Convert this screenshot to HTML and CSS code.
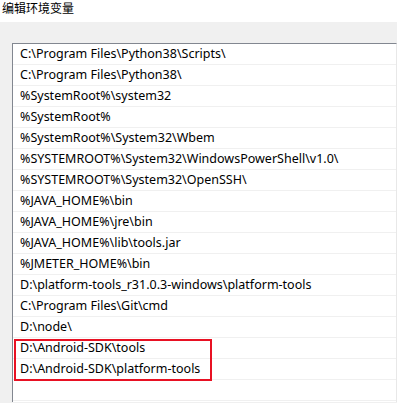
FILE: index.html
```html
<!DOCTYPE html>
<html lang="zh-CN">
<head>
<meta charset="utf-8">
<title>编辑环境变量</title>
<link rel="stylesheet" href="styles.css">
</head>
<body>
<div class="titlebar">编辑环境变量</div>
<div class="panel">
  <div class="listbox">
    <div class="row">C:\Program Files\Python38\Scripts\</div>
    <div class="row">C:\Program Files\Python38\</div>
    <div class="row">%SystemRoot%\system32</div>
    <div class="row">%SystemRoot%</div>
    <div class="row">%SystemRoot%\System32\Wbem</div>
    <div class="row">%SYSTEMROOT%\System32\WindowsPowerShell\v1.0\</div>
    <div class="row">%SYSTEMROOT%\System32\OpenSSH\</div>
    <div class="row">%JAVA_HOME%\bin</div>
    <div class="row">%JAVA_HOME%\jre\bin</div>
    <div class="row">%JAVA_HOME%\lib\tools.jar</div>
    <div class="row">%JMETER_HOME%\bin</div>
    <div class="row">D:\platform-tools_r31.0.3-windows\platform-tools</div>
    <div class="row">C:\Program Files\Git\cmd</div>
    <div class="row">D:\node\</div>
    <div class="highlight-group">
      <div class="row">D:\Android-SDK\tools</div>
      <div class="row">D:\Android-SDK\platform-tools</div>
      <div class="mark"></div>
    </div>
    <div class="row"></div>
  </div>
</div>
</body>
</html>
```
FILE: styles.css
```css
html, body {
  margin: 0;
  padding: 0;
  background: #f0f0f0;
  overflow: hidden;
}
body {
  width: 397px;
  height: 403px;
  font-family: "Noto Sans", "Noto Sans CJK SC", sans-serif;
  font-size: 12.5px;
  color: #000;
}
.titlebar {
  height: 22px;
  background: #fff;
  padding-left: 2px;
  line-height: 16px;
  font-family: "Noto Sans CJK SC", sans-serif;
  font-size: 12px;
  box-sizing: border-box;
}
.panel {
  padding: 21px 0 0 12px;
}
.listbox {
  background: #fff;
  border-top: 1px solid #828790;
  border-left: 1px solid #828790;
  border-right: 1px solid #e8e8e8;
  height: 358px;
  overflow: hidden;
}
.row {
  height: 20px;
  line-height: 20px;
  border-bottom: 1px solid #f0f0f0;
  padding-left: 7px;
  white-space: nowrap;
}
.highlight-group {
  position: relative;
}
.mark {
  position: absolute;
  left: 1px;
  top: 1px;
  width: 194px;
  height: 38px;
  border: 2px solid #e81123;
}
```
